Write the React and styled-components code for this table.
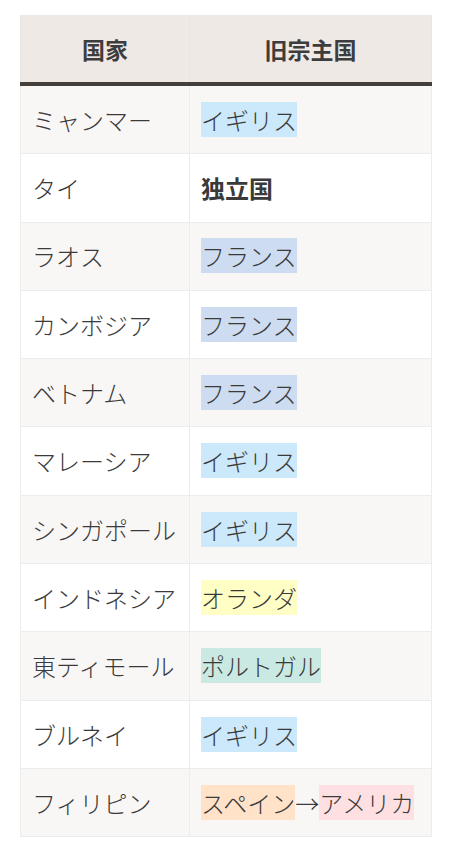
import styled, { createGlobalStyle } from "styled-components";

const GlobalStyle = createGlobalStyle`
  body {
    margin: 0;
    background: #fff;
    font-family: "Noto Sans CJK JP", "Noto Sans", sans-serif;
    color: #333;
  }
`;

const Page = styled.div`
  padding: 15px 26px 0 20px;
`;

const Table = styled.table`
  width: 409px;
  border-collapse: collapse;
  table-layout: fixed;
`;

const HeadCell = styled.th`
  height: 67px;
  padding: 0;
  background: #efe9e6;
  border-left: 1px solid #ebe5e2;
  border-right: 1px solid #ebe5e2;
  border-bottom: 4px solid #453f3c;
  font-size: 23px;
  font-weight: 700;
  color: #3d3d3d;
  text-align: center;
  width: ${(p) => p.w}px;
`;

const Row = styled.tr`
  background: ${(p) => (p.odd ? "#f9f7f6" : "#fff")};
`;

const Cell = styled.td`
  height: 67.3px;
  padding: 0 11px;
  border: 1px solid #ececec;
  font-size: 24px;
  line-height: 1.4;
  font-weight: ${(p) => (p.bold ? 700 : 300)};
  color: #3a3a3a;
  white-space: nowrap;
`;

const colors = {
  uk: "#cce8fb",
  fr: "#cddcf0",
  nl: "#ffffc5",
  pt: "#c9e9e2",
  es: "#ffe2c8",
  us: "#ffe0e2",
};

const Mark = styled.span`
  background: ${(p) => colors[p.c]};
`;

const rows = [
  ["ミャンマー", [["イギリス", "uk"]]],
  ["タイ", null],
  ["ラオス", [["フランス", "fr"]]],
  ["カンボジア", [["フランス", "fr"]]],
  ["ベトナム", [["フランス", "fr"]]],
  ["マレーシア", [["イギリス", "uk"]]],
  ["シンガポール", [["イギリス", "uk"]]],
  ["インドネシア", [["オランダ", "nl"]]],
  ["東ティモール", [["ポルトガル", "pt"]]],
  ["ブルネイ", [["イギリス", "uk"]]],
  ["フィリピン", [["スペイン", "es"], ["アメリカ", "us"]]],
];

export default function App() {
  return (
    <>
      <GlobalStyle />
      <Page>
        <Table>
          <thead>
            <tr>
              <HeadCell w={168}>国家</HeadCell>
              <HeadCell w={241}>旧宗主国</HeadCell>
            </tr>
          </thead>
          <tbody>
            {rows.map(([country, rulers], i) => (
              <Row key={country} odd={i % 2 === 0}>
                <Cell>{country}</Cell>
                {rulers ? (
                  <Cell>
                    {rulers.map(([name, c], j) => (
                      <span key={name}>
                        {j > 0 && "→"}
                        <Mark c={c}>{name}</Mark>
                      </span>
                    ))}
                  </Cell>
                ) : (
                  <Cell bold>独立国</Cell>
                )}
              </Row>
            ))}
          </tbody>
        </Table>
      </Page>
    </>
  );
}
